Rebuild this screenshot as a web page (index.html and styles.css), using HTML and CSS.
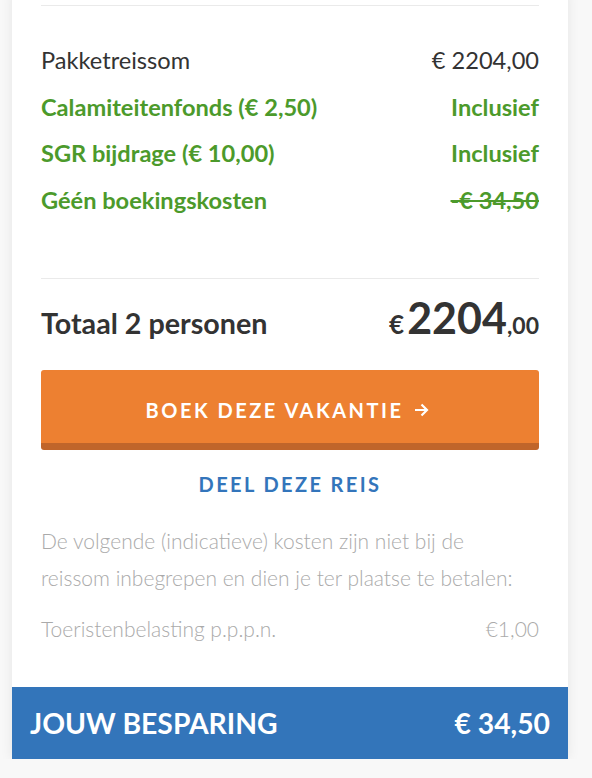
FILE: index.html
```html
<!DOCTYPE html>
<html lang="nl">

<head>
    <meta charset="UTF-8">
    <meta name="viewport" content="width=device-width, initial-scale=1.0">
    <title>Prijsoverzicht</title>
    <link rel="stylesheet" href="styles.css">
</head>

<body>
    <div class="price-card">
        <div class="price-list">
            <div class="price-row">
                <span>Pakketreissom</span>
                <span>€ 2204,00</span>
            </div>
            <div class="price-row green">
                <span>Calamiteitenfonds (€ 2,50)</span>
                <span>Inclusief</span>
            </div>
            <div class="price-row green">
                <span>SGR bijdrage (€ 10,00)</span>
                <span>Inclusief</span>
            </div>
            <div class="price-row green">
                <span>Géén boekingskosten</span>
                <span class="strike">-€ 34,50</span>
            </div>
        </div>

        <div class="total">
            <span class="total-label">Totaal 2 personen</span>
            <span class="total-price">
                <span class="cur">€</span><span class="big">2204</span><span class="cents">,00</span>
            </span>
        </div>

        <a href="#" class="book-btn">Boek deze vakantie <span class="arrow">
            <svg width="15" height="14" viewBox="0 0 15 14"><path d="M1 7h12M7.5 1.5 13 7l-5.5 5.5" fill="none" stroke="#fff" stroke-width="2.2"/></svg>
        </span></a>
        <a href="#" class="share">Deel deze reis</a>

        <p class="extra-info">De volgende (indicatieve) kosten zijn niet bij de reissom inbegrepen en dien je ter plaatse te betalen:</p>
        <div class="extra-row">
            <span>Toeristenbelasting p.p.p.n.</span>
            <span>€1,00</span>
        </div>

        <div class="saving">
            <span>JOUW BESPARING</span>
            <span>€ 34,50</span>
        </div>
    </div>
</body>

</html>
```

FILE: styles.css
```css
* {
    margin: 0;
    padding: 0;
    box-sizing: border-box;
}

body {
    background: #f8f8f8;
    font-family: Lato, "Liberation Sans", sans-serif;
    color: #333;
}

.price-card {
    width: 556px;
    margin: -10px 0 0 12px;
    padding: 15px 0 0;
    background: #fff;
    box-shadow: 0 0 12px rgba(0, 0, 0, 0.08);
}

.price-list {
    margin: 0 29px;
    padding: 31px 0 55px;
    border-top: 1px solid #eaeaea;
    border-bottom: 1px solid #eaeaea;
}

.price-row {
    display: flex;
    justify-content: space-between;
    font-size: 23.6px;
    line-height: 46.5px;
}

.price-row.green {
    color: #4c9a2b;
    font-weight: bold;
}

.strike {
    text-decoration: line-through;
}

.total {
    display: flex;
    justify-content: space-between;
    align-items: baseline;
    margin: 0 29px;
    padding: 17px 0 31px;
    line-height: 1;
}

.total-label {
    font-size: 28.7px;
    font-weight: bold;
}

.total-price {
    font-weight: bold;
}

.total-price .cur {
    font-size: 26px;
    margin-right: 3px;
}

.total-price .big {
    font-size: 43px;
}

.total-price .cents {
    font-size: 23px;
}

.book-btn {
    display: flex;
    justify-content: center;
    align-items: center;
    gap: 11px;
    margin: 0 29px;
    height: 80px;
    padding: 6px 5px 0 0;
    background: #ed8031;
    border-bottom: 7px solid #c0652a;
    border-radius: 3px;
    color: #fff;
    font-size: 20px;
    line-height: 24px;
    font-weight: bold;
    letter-spacing: 2.5px;
    text-transform: uppercase;
    text-decoration: none;
}

.book-btn .arrow {
    display: flex;
}

.share {
    display: block;
    margin-top: 22px;
    text-align: center;
    color: #3375bb;
    font-size: 20px;
    line-height: 24px;
    font-weight: bold;
    letter-spacing: 2.4px;
    text-transform: uppercase;
    text-decoration: none;
}

.extra-info {
    margin: 26px 37px 0 29px;
    color: #aaa;
    font-size: 21px;
    font-weight: 300;
    line-height: 37px;
}

.extra-row {
    display: flex;
    justify-content: space-between;
    margin: 16px 29px 0;
    padding-bottom: 41px;
    color: #aaa;
    font-size: 21px;
    font-weight: 300;
    line-height: 34px;
}

.saving {
    display: flex;
    justify-content: space-between;
    align-items: center;
    height: 72px;
    padding: 0 18px;
    background: #3375ba;
    color: #fff;
    font-size: 28.3px;
    font-weight: bold;
}
```
